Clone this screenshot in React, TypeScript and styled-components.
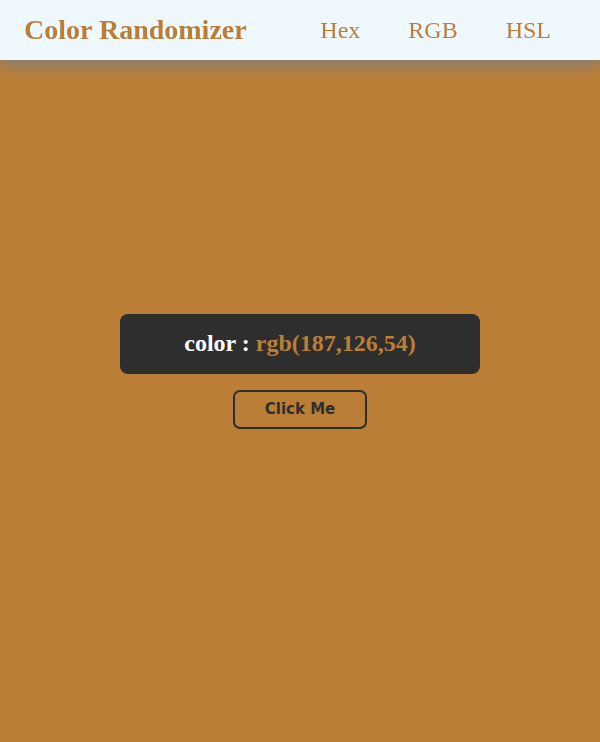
import styled, { createGlobalStyle } from "styled-components";

const GlobalStyle = createGlobalStyle`
  * {
    box-sizing: border-box;
  }
  body {
    margin: 0;
    background-color: rgb(187, 126, 54);
    font-family: "Liberation Serif", "Times New Roman", serif;
  }
`;

const NavBar = styled.nav`
  position: fixed;
  top: 0;
  left: 0;
  right: 0;
  height: 60px;
  background-color: aliceblue;
  display: flex;
  align-items: center;
  justify-content: space-between;
  padding: 0 49px 0 24px;
  box-shadow: 0 6px 14px rgba(128, 128, 128, 0.9);
`;

const Title = styled.h1`
  margin: 0;
  font-size: 28px;
  font-weight: bold;
  color: rgb(187, 126, 54);
`;

const Links = styled.ul`
  display: flex;
  gap: 48px;
  list-style: none;
  margin: 0;
  padding: 0;
`;

const LinkItem = styled.li`
  font-size: 24px;
  color: rgb(187, 126, 54);
  cursor: pointer;
`;

const Main = styled.main`
  height: 100vh;
  display: flex;
  flex-direction: column;
  align-items: center;
  justify-content: center;
  gap: 16px;
`;

const ColorCard = styled.div`
  width: 360px;
  height: 60px;
  background-color: #2e2e2e;
  border-radius: 8px;
  display: flex;
  align-items: center;
  justify-content: center;
  font-size: 24px;
  font-weight: bold;
  color: white;
`;

const ColorValue = styled.span`
  color: rgb(187, 126, 54);
  margin-left: 6px;
`;

const ClickButton = styled.button`
  width: 134px;
  height: 39px;
  background: transparent;
  border: 2px solid #2e2e2e;
  border-radius: 7px;
  font-family: "DejaVu Sans", Verdana, sans-serif;
  font-size: 15px;
  font-weight: bold;
  color: #2e2e2e;
  cursor: pointer;
`;

export default function App() {
  return (
    <>
      <GlobalStyle />
      <NavBar>
        <Title>Color Randomizer</Title>
        <Links>
          <LinkItem>Hex</LinkItem>
          <LinkItem>RGB</LinkItem>
          <LinkItem>HSL</LinkItem>
        </Links>
      </NavBar>
      <Main>
        <ColorCard>
          color :<ColorValue>rgb(187,126,54)</ColorValue>
        </ColorCard>
        <ClickButton>Click Me</ClickButton>
      </Main>
    </>
  );
}
